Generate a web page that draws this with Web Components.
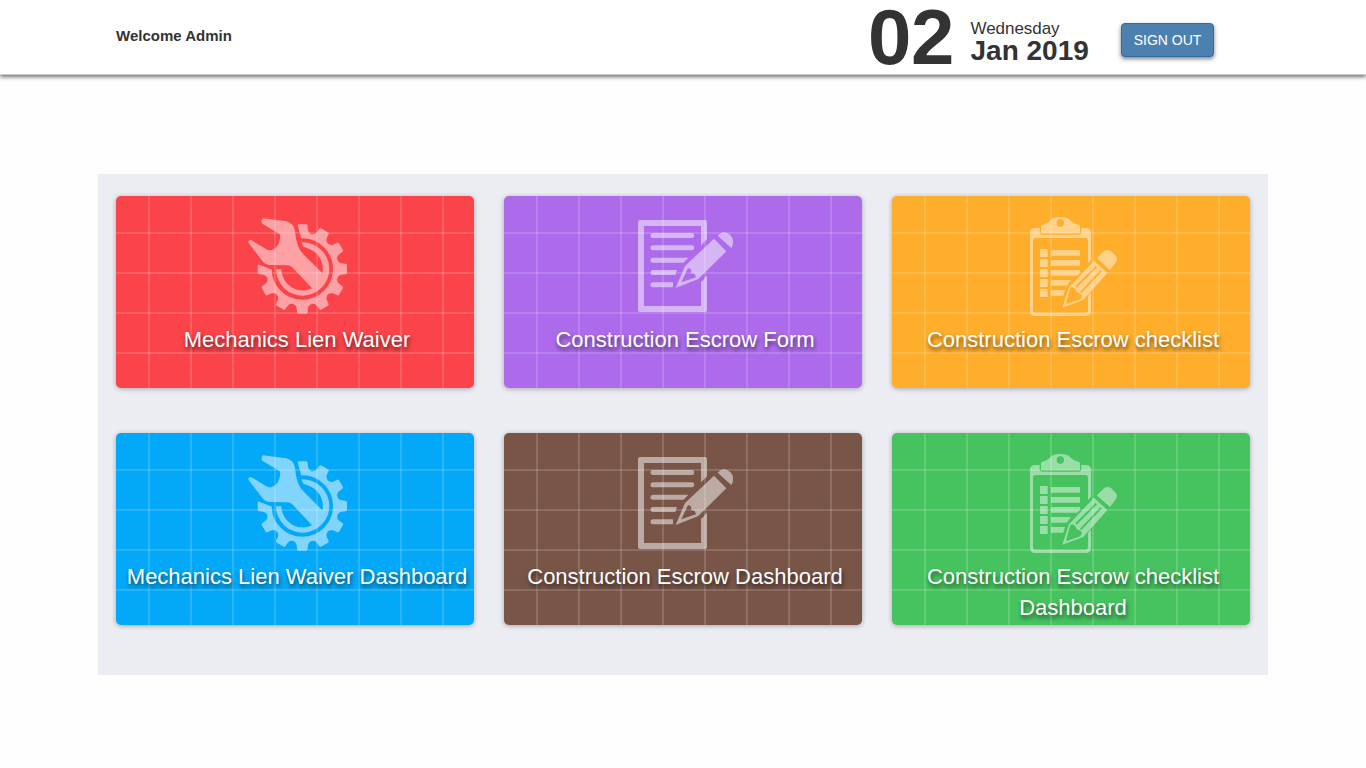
<!DOCTYPE html>
<html lang="en">
<head>
<meta charset="utf-8">
<title>Dashboard</title>
<style>
body{margin:0;background:#fefefe;font-family:Arial,"Liberation Sans",sans-serif;color:#333}
</style>
</head>
<body>
<admin-page></admin-page>

<template id="icon-gear">
<svg viewBox="0 0 345 330" width="115" height="110">
<defs>
<clipPath id="open"><path d="M172 0V43L184 86L190 112V178H92L54 163L0 163V330H345V0Z"/></clipPath>
<path id="tooth" d="M-30-104Q-18-108-17-118L-16-129Q-16-134-11-134H11Q16-134 16-129L17-118Q18-108 30-104Z"/>
</defs>
<g fill="#fff" opacity=".5">
<g clip-path="url(#open)"><g transform="translate(187 177)">
<circle r="100" fill="none" stroke="#fff" stroke-width="16"/>
<use href="#tooth"/><use href="#tooth" transform="rotate(30)"/><use href="#tooth" transform="rotate(60)"/><use href="#tooth" transform="rotate(90)"/><use href="#tooth" transform="rotate(120)"/><use href="#tooth" transform="rotate(150)"/><use href="#tooth" transform="rotate(180)"/><use href="#tooth" transform="rotate(210)"/><use href="#tooth" transform="rotate(240)"/><use href="#tooth" transform="rotate(270)"/>
</g></g>
<path d="M185 97A80 80 0 1 1 108 178H124A64.500 64.500 0 0 0 216 235L156 171Q150 166 141 166L88 165Q76 164 70 157L26 99Q22 90 33 90L79 118Q87 122 96 120Q119 112 121 78L119 73L67 41Q61 32 69 25L139 34Q162 40 165 64Q169 116 193 136L247 190A64.500 64.500 0 0 0 200 114Q190 112 187 105Z"/>
</g></svg>
</template>

<template id="icon-form">
<svg viewBox="0 0 345 330" width="115" height="110">
<g fill="#fff" opacity=".5">
<path d="M30 30H225Q231 30 231 36V88L213 106V48H42V288H213V215Q221 212 224 203L231 197V300Q231 306 225 306H30Q24 306 24 300V36Q24 30 30 30Z"/>
<path d="M69 69H185A7.500 7.500 0 0 1 185 84H69A7.500 7.500 0 0 1 69 69ZM69 106H185A7.500 7.500 0 0 1 185 121H69A7.500 7.500 0 0 1 69 106ZM69 143H175L161 158H69A7.500 7.500 0 0 1 69 143ZM69 180H141L136 195H69A7.500 7.500 0 0 1 69 180ZM69 217H129V232H69A7.500 7.500 0 0 1 69 217Z"/>
<path fill-rule="evenodd" d="M252 86L289 124L205 207L137 234L165 168ZM174 174L154 217L198 202L194 192L184 189L183 178Z"/>
<path d="M263 77Q274 65 285 67Q306 72 309 92Q311 105 304 114Z"/>
</g></svg>
</template>

<template id="icon-checklist">
<svg viewBox="0 0 345 330" width="115" height="110">
<g fill="#fff" opacity=".45">
<path d="M46 54H59V67Q59 74 66 74H177Q184 74 184 67V54H197Q213 54 213 68V150L204 160V92Q204 84 196 84H47Q39 84 39 92V300Q39 308 47 308H196Q204 308 204 300V258L213 248V302Q213 318 197 318H46Q30 318 30 302V68Q30 54 46 54Z"/>
<path fill-rule="evenodd" d="M63 65V49Q63 44 72 43Q83 41 91 31Q101 21 121 21Q141 21 151 31Q160 41 171 43Q180 44 180 49V65Q180 70 175 70H68Q63 70 63 65ZM132 39A11 11 0 1 0 110 39A11 11 0 1 0 132 39Z"/>
<path d="M60 117H83V141H60ZM60 147H83V171H60ZM60 177H83V201H60ZM60 207H83V231H60ZM60 237H83V261H60ZM93 120H180V137H93ZM93 150H180V167H93ZM93 180H180V188L172 197H93ZM93 210H153L140 227H93ZM93 240H135L130 257H93Z"/>
<path fill-rule="evenodd" d="M222 152L262 189L190 270L127 293L147 232ZM151 234L139 276Q138 285 147 280L181 268L186 259L182 251L169 246L166 237L157 232ZM227 168L166 229L170 233L231 172ZM241 181L180 245L184 249L245 185Z"/>
<path d="M230 145L253 123Q262 116 273 124L287 137Q295 147 286 159L270 180Z"/>
</g></svg>
</template>

<script>
const define = (name, html) => customElements.define(name, class extends HTMLElement {
  constructor() {
    super();
    this.attachShadow({mode: 'open'}).innerHTML = html;
  }
});

define('date-badge', `<style>
:host{display:flex;color:#333}
.day{font-weight:700;font-size:78px;line-height:74px;width:102.500px;letter-spacing:-.5px}
.rest{padding-top:20px}
.week{font-size:17px;line-height:18px;letter-spacing:-.05px}
.month{font-size:28px;font-weight:700;line-height:26px;white-space:nowrap}
</style><div class="day"><slot name="day"></slot></div><div class="rest"><div class="week"><slot name="week"></slot></div><div class="month"><slot name="month"></slot></div></div>`);

define('sign-out', `<style>
:host{display:block}
button{display:block;box-sizing:border-box;width:93px;height:34px;padding:0;border:1px solid #2e6da4;border-radius:4px;background:#4c81af;color:#fff;font:14px/20px Arial,"Liberation Sans",sans-serif;box-shadow:0 2px 4px rgba(0,0,0,.5)}
</style><button><slot></slot></button>`);

define('top-bar', `<style>
:host{display:block;height:74px;background:#fff;border-bottom:1px solid #ccc;box-shadow:0 2px 4px rgba(0,0,0,.55)}
.row{display:flex;width:1170px;margin:0 auto;height:74px}
.hello{font-size:15px;font-weight:700;line-height:20px;padding:26px 0 0 18px;flex:1}
date-badge{width:253px}
sign-out{padding-top:23px;width:147px}
</style><div class="row"><div class="hello">Welcome Admin</div>
<date-badge><span slot="day">02</span><span slot="week">Wednesday</span><span slot="month">Jan 2019</span></date-badge>
<sign-out>SIGN OUT</sign-out></div>`);

customElements.define('tile-icon', class extends HTMLElement {
  connectedCallback() {
    if (this.shadowRoot) return;
    const root = this.attachShadow({mode: 'open'});
    root.innerHTML = '<style>:host{display:block}svg{display:block}</style>';
    root.append(document.getElementById('icon-' + this.getAttribute('name')).content.cloneNode(true));
  }
});

customElements.define('icon-tile', class extends HTMLElement {
  connectedCallback() {
    if (this.shadowRoot) return;
    const root = this.attachShadow({mode: 'open'});
    root.innerHTML = `<style>
:host{display:block;box-sizing:border-box;height:192px;border-radius:5px;color:#fff;padding-top:14px;
background:linear-gradient(90deg,rgba(255,255,255,.15) 2px,transparent 2px) 32px 0/42px 100%,linear-gradient(rgba(255,255,255,.15) 2px,transparent 2px) 0 36px/100% 40px,var(--tile);
box-shadow:0 1px 5px rgba(0,0,0,.3)}
tile-icon{height:110px;padding-left:var(--icon-left)}
.label{font-size:22px;line-height:31px;text-align:center;padding:4px 0 0 4px;text-shadow:1px 3px 4px rgba(0,0,0,.6)}
</style><tile-icon name="${this.getAttribute('icon')}"></tile-icon><div class="label"><slot></slot></div>`;
    const left = {gear: 124, form: 126, checklist: 128};
    this.style.setProperty('--icon-left', left[this.getAttribute('icon')] + 'px');
    this.style.setProperty('--tile', this.getAttribute('color'));
  }
});

define('tile-board', `<style>
:host{display:grid;box-sizing:border-box;width:1170px;height:501px;margin:99px auto 0;padding:22px 18px 0;grid-template-columns:repeat(3,358px);column-gap:30px;row-gap:45px;align-content:start;background:#ecedf3}
</style><slot></slot>`);

define('admin-page', `<style>:host{display:block}</style>
<top-bar></top-bar>
<tile-board>
<icon-tile icon="gear" color="#fb434a">Mechanics Lien Waiver</icon-tile>
<icon-tile icon="form" color="#ad6beb">Construction Escrow Form</icon-tile>
<icon-tile icon="checklist" color="#ffae2b">Construction Escrow checklist</icon-tile>
<icon-tile icon="gear" color="#03a9f8">Mechanics Lien Waiver Dashboard</icon-tile>
<icon-tile icon="form" color="#795548">Construction Escrow Dashboard</icon-tile>
<icon-tile icon="checklist" color="#46c35f">Construction Escrow checklist Dashboard</icon-tile>
</tile-board>`);
</script>
</body>
</html>
